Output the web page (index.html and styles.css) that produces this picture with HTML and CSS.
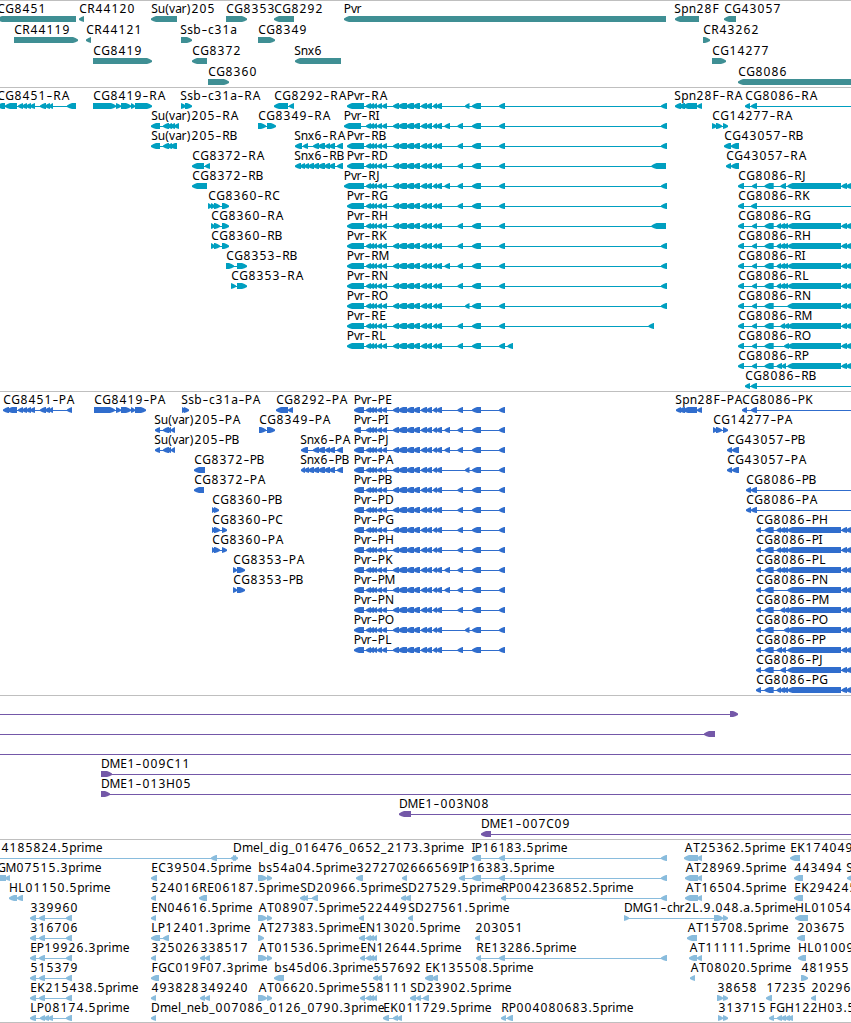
FILE: index.html
```html
<!DOCTYPE html>
<html lang="en">
<head>
<meta charset="utf-8">
<title>Genome browser</title>
<link rel="stylesheet" href="styles.css">
</head>
<body>
<main class="browser">
  <section class="track genes"><svg class="canvas" id="genes"></svg></section>
  <section class="track transcripts"><svg class="canvas" id="transcripts"></svg></section>
  <section class="track proteins"><svg class="canvas" id="proteins"></svg></section>
  <section class="track bacs"><svg class="canvas" id="bacs"></svg></section>
  <section class="track ests"><svg class="canvas" id="ests"></svg></section>
</main>
<script src="tracks.js"></script>
</body>
</html>
```
FILE: styles.css
```css
body {
  margin: 0;
  background: #fff;
}
.browser {
  display: flex;
  flex-direction: column;
  width: 851px;
  height: 1023px;
  overflow: hidden;
}
.track {
  box-sizing: border-box;
  flex: none;
  border-top: 1px solid #bfbfbf;
}
.genes { height: 87px; color: #3f8f94; }
.transcripts { height: 304px; color: #009fc0; }
.proteins { height: 304px; color: #306dcd; }
.bacs { height: 144px; color: #7458a8; }
.ests { height: 184px; color: #89bcdd; border-bottom: 1px solid #bfbfbf; }
.canvas {
  display: block;
  width: 100%;
  height: 100%;
}
.shape { fill: currentColor; }
.label {
  fill: #000;
  font-family: "Noto Sans", sans-serif;
  font-size: 12px;
}
.dash {
  font-size: 18px;
  font-weight: 300;
}
```
FILE: tracks.js
```js
// Feature rows: row | label | x | direction | exons | optional line span
const PVR = '366-371 369.5-374 373-377 377-382 382-387 393-399 398-407 406-414 413-420 421-427 426-432 433-437 436-442 ';
const TAIL = '472-481 499-505';
const A = '444.5-450 ', B = '457.5-463 ', C = '465-469.5 ';

const genes = `
0|CG8451|-3|L|-3-76
1|CR44119|14|R|14-78
0|CR44120|79|L|79-84
1|CR44121|86|L|86-91
2|CG8419|93|R|93-152
0|Su(var)205|151|L|151-177
1|Ssb-c31a|180|R|181-192
2|CG8372|192|L|192-207
3|CG8360|208|R|208-229
0|CG8353|226|R|226-247
1|CG8349|258|R|258-275
0|CG8292|274|L|274-294
2|Snx6|294|L|295-341
0|Pvr|344|L|344-666
0|Spn28F|674|L|675-699
1|CR43262|703|R|703-710
2|CG14277|712|R|712-726
0|CG43057|724|L|724-736
3|CG8086|738|L|738-860`;

let transcripts = `
0|CG8451-RA|-3|L|-3-5 5-17 18-23 22-27 26-31 30-35 40-46 45-50 49-53 67-76
0|CG8419-RA|93|R|93-116 116-121 121-131 131-135 135-152
0|Ssb-c31a-RA|180|R|181-186 185-192
1|Su(var)205-RA|151|L|151-160 163-169 167-172 170-175 174-179
2|Su(var)205-RB|151|L|151-160 163-169 167-172 170-177
3|CG8372-RA|192|L|192-204 205-210
4|CG8372-RB|192|L|192-207
5|CG8360-RC|208|R|208-212 211-215 214-220 222-229
6|CG8360-RA|211|R|211-215 214-220 222-229
7|CG8360-RB|211|R|211-215 214-220 222-229
8|CG8353-RB|226|R|226-234 237-247
9|CG8353-RA|231|R|231-236 237-247
0|CG8292-RA|274|L|274-288 289-294
1|CG8349-RA|258|R|258-266 267-276
2|Snx6-RA|294|L|295-302 303-308 313-319 318-325 325-330 329-335 337-343
3|Snx6-RB|294|L|295-301 300-305 304-309 308-314 313-319 318-325 324-330 329-335 337-343
0|Spn28F-RA|674|L|675-681 679-685 683-697 697-702
1|CG14277-RA|712|R|712-717 716-722 723-728
2|CG43057-RB|724|L|724-731 731-739
3|CG43057-RA|726|L|726-731 731-739
0|CG8086-RA|745|L|745-750 751-757 860-870
5|CG8086-RK|738|L|738-744 751-757 860-870
14|CG8086-RB|745|L|745-750 751-757 860-870`;

let proteins = `
0|CG8451-PA|3|L|3-9 7-17 18-23 22-27 26-31 30-35 40-46 45-50 49-53 67-72
0|CG8419-PA|94|R|94-115 116-121 121-131 131-135 135-146
0|Ssb-c31a-PA|181|R|182-186 184-189
1|Su(var)205-PA|154|L|155-160 163-169 167-171 171-175
2|Su(var)205-PB|154|L|155-160 163-169 167-171 171-175
3|CG8372-PB|194|L|194-205
4|CG8372-PA|194|L|194-204
5|CG8360-PB|212|R|212-215 214-219
6|CG8360-PC|212|R|212-215 214-220 222-227
7|CG8360-PA|212|R|212-215 214-220 222-227
8|CG8353-PA|233|R|233-237 237-245
9|CG8353-PB|233|R|233-237 237-245
0|CG8292-PA|276|L|276-288 288-293
1|CG8349-PA|259|R|259-266 267-275
2|Snx6-PA|300|L|301-308 313-319 318-325 325-330 329-335 337-343
3|Snx6-PB|300|L|301-305 304-309 308-314 313-319 318-325 324-330 329-335 337-343
0|Spn28F-PA|675|L|676-681 679-685 683-697 697-702
1|CG14277-PA|713|R|713-717 716-722 723-728
2|CG43057-PB|727|L|727-732 732-739
3|CG43057-PA|727|L|727-732 732-739
0|CG8086-PK|742|L|742-747 751-757 860-870
4|CG8086-PB|746|L|746-751 751-757 860-870
5|CG8086-PA|746|L|746-751 751-757 860-870`;

[['RA', C], ['RI', A + B, 344, 361], ['RB', B], ['RD', B, 347, 364, '651.5-666'], ['RJ', A + B, 344, 364],
 ['RG', B], ['RH', B, 347, 364, '651.5-666'], ['RK', B], ['RM', A + B], ['RN', B], ['RO', C],
 ['RE', B, 347, 364, '648.5-654'], ['RL', B, 347, 364, '507.5-513']
].forEach(([id, mid, x = 347, end = 364, last = '661-667'], row) => {
  transcripts += `\n${row}|Pvr-${id}|${x}|L|${x}-${end} ${PVR}${mid}${TAIL} ${last}`;
});
[['PE', B], ['PI', A + B, 361], ['PJ', A + B], ['PA', C], ['PB', B], ['PD', B], ['PG', B], ['PH', B],
 ['PK', A + B], ['PM', A + B], ['PN', B], ['PO', C], ['PL', B]
].forEach(([id, mid, end = 364], row) => {
  proteins += `\n${row}|Pvr-${id}|354|L|354-${end} ${PVR}${mid}${TAIL}`;
});

// Optional exons of CG8086, keyed by isoform
const FULL = '776.7-781 780-785 783-788 ';
const ISO = { J: '780.5-786 ', G: FULL, H: FULL, I: FULL, L: FULL, N: '', M: '780.5-785 784-789 ',
  O: '784-789 ', P: '776.7-782 781.5-786 ' };
const END = '787.5-841 841.5-847 846-851 850-860';
[['J', 4], ['G', 6], ['H', 7], ['I', 8], ['L', 9], ['N', 10], ['M', 11], ['O', 12], ['P', 13]].forEach(([k, row]) => {
  transcripts += `\n${row}|CG8086-R${k}|738|L|738-744 752-757 764.5-773.7 ${ISO[k]}${END}`;
});
[...'HILNMOPJG'].forEach((k, i) => {
  proteins += `\n${i + 6}|CG8086-P${k}|756|L|756-761 764.5-773.7 ${ISO[k]}${END}`;
});

const bacs = `
0||0|R|-20--10 730-738
1||0|L|-20--10 704-715
2||0|R|-20--10 870-880
3|DME1-009C11|101|R|101-112 870-880
4|DME1-013H05|101|R|101-110 870-880
5|DME1-003N08|399|L|399-411 870-880
6|DME1-007C09|481|L|481-491 870-880`;

const ests = `
0|4185824.5prime|1|L|-20--10 211-217 231-236
0|Dmel_dig_016476_0652_2173.3prime|233|R|233-238
0|IP16183.5prime|472|L|472-481 499-505 661-667
0|AT25362.5prime|684|L|684-698 697-702
0|EK174049.5prime|790|L|790-800
1|GM07515.3prime|-3|L|-5-6 5-10
1|EC39504.5prime|151|L|151-157
1|bs54a04.5prime|258|R|258-267 267-272
1|327270|356|L|356-363
1|2666569|402|L|402-407
1|IP16383.5prime|459|L|459-465 472-481 499-505 661-667
1|AT28969.5prime|685|L|685-698 697-702
1|443494|794|L|794-803
1|SD15239.5prime|846|L|847-856
2|HL01150.5prime|9|L|9-17 17-23
2|524016|151|L|151-156
2|RE06187.5prime|199|L|199-207
2|SD20966.5prime|300|L|300-305 303-308 312-318
2|SD27529.5prime|401|L|401-406 405-411
2|RP004236852.5prime|501|L|501-506 661-667
2|AT16504.5prime|685|L|685-698 697-702
2|EK294245.5prime|794|L|794-803
3|339960|30|L|30-36 39-45 66-72
3|EN04616.5prime|151|L|151-156
3|AT08907.5prime|258|R|258-267 267-272
3|522449|359|L|359-364
3|SD27561.5prime|408|L|408-413
3|DMG1-chr2L.9.048.a.5prime|624|R|624-629 714-723 723-728
3|HL01054.5prime|795|L|795-808
4|316706|30|L|30-36 39-45 66-72
4|LP12401.3prime|151|L|151-160 163-169
4|AT27383.5prime|258|R|258-264
4|EN13020.5prime|359|L|359-365 366-371 369-374 373-377
4|203051|475|L|475-480
4|AT15708.5prime|687|L|687-697
4|203675|797|L|797-805
5|EP19926.3prime|30|L|30-36 39-45 66-72
5|325026|151|L|151-156
5|338517|200|L|200-205 205-210
5|AT01536.5prime|258|R|258-267 267-272
5|EN12644.5prime|360|L|360-365 366-371 369-374 373-377
5|RE13286.5prime|476|L|476-481 499-505 661-667
5|AT11111.5prime|689|L|689-697 697-702
5|HL01009.5prime|798|L|798-806
6|515379|30|L|30-36 39-45 66-72
6|FGC019F07.3prime|151|L|151-159
6|bs45d06.3prime|274|L|274-284
6|557692|373|L|373-378 377-382
6|EK135508.5prime|425|L|425-433 432-438
6|AT08020.5prime|690|L|690-695
6|481955|801|R|801-808
7|EK215438.5prime|30|L|30-36 39-45 66-72
7|493828|151|L|151-156
7|349240|200|L|200-205 205-210
7|AT06620.5prime|258|R|258-267 267-272
7|558111|360|L|360-365 366-371 369-374 373-377
7|SD23902.5prime|410|L|410-416 416-421 423-429
7|38658|717|R|717-723 723-728
7|17235|766|L|766-772
7|20296|811|L|811-816
8|LP08174.5prime|30|L|30-36 40-45 44-49 48-53 66-72
8|Dmel_neb_007086_0126_0790.3prime|151|L|151-156
8|EK011729.5prime|383|L|383-389 393-398 397-402
8|RP004080683.5prime|501|L|501-506 507-513
8|313715|718|R|718-723 723-728
8|FGH122H03.5prime|769|L|769-774 777-782 781-786 785-790 788-793`;

const ADVANCE = { A: 9, B: 7, C: 8, D: 9, E: 7, F: 7, G: 9, H: 9, I: 3, J: 4, K: 8, L: 7, M: 10, N: 9, O: 9,
  P: 7, R: 8, S: 7, T: 7, a: 7, b: 8, c: 6, d: 8, e: 7, g: 8, h: 7, i: 3.6, l: 3, m: 11, n: 7, p: 8, r: 4,
  s: 6, u: 7, v: 6, x: 6, '-': 7, '.': 4, '_': 6, '(': 4, ')': 5 };
const pen = document.createElement('canvas').getContext('2d');

const NS = 'http://www.w3.org/2000/svg';
function add(parent, name, attrs, text) {
  const el = document.createElementNS(NS, name);
  for (const key in attrs) el.setAttribute(key, attrs[key]);
  if (text) el.textContent = text;
  parent.appendChild(el);
  return el;
}

// Exon block whose leading end tapers to a rounded point
function arrow(x1, x2, dir, mid) {
  const head = Math.min(x2 - x1, 5);
  const tip = dir === 'L' ? x1 : x2, back = dir === 'L' ? x2 : x1, s = dir === 'L' ? 1 : -1;
  return `M${tip} ${mid - .6}L${tip + s * head * .5} ${mid - 2}L${tip + s * head} ${mid - 3}H${back}V${mid + 3}` +
    `H${tip + s * head}L${tip + s * head * .5} ${mid + 2.2}L${tip} ${mid + 1}Z`;
}

function draw(id, data, pitch) {
  const svg = document.getElementById(id);
  data.trim().split('\n').forEach(line => {
    const [row, label, x, dir, list] = line.split('|');
    const mid = 18 + row * pitch;
    const exons = list.split(' ').map(s => s.match(/^(-?[\d.]+)-(-?[\d.]+)$/).slice(1).map(Number));
    const first = exons[0][0], last = exons[exons.length - 1][1];
    if (exons.length > 1) add(svg, 'rect', { class: 'shape', x: first + 1, y: mid, width: last - first - 2, height: 1 });
    exons.forEach(e => add(svg, 'path', { class: 'shape', d: arrow(e[0], e[1], dir, mid) }));
    if (!label) return;
    let cursor = Number(x);
    const xs = [], ys = [];
    for (const ch of label) {
      const step = ADVANCE[ch] || 8;
      pen.font = ch === '-' ? '300 18px "Noto Sans"' : '12px "Noto Sans"';
      xs.push((cursor + (step - pen.measureText(ch).width) / 2).toFixed(2));
      ys.push(ch === '-' ? mid - 5 : mid - 6);
      cursor += step;
    }
    const text = add(svg, 'text', { class: 'label', x: xs.join(' '), y: ys.join(' ') });
    label.split(/(-)/).forEach(part => {
      if (part === '-') add(text, 'tspan', { class: 'dash' }, part);
      else text.appendChild(document.createTextNode(part));
    });
  });
}

draw('genes', genes, 21);
draw('transcripts', transcripts, 20);
draw('proteins', proteins, 20);
draw('bacs', bacs, 20);
draw('ests', ests, 20);
```
